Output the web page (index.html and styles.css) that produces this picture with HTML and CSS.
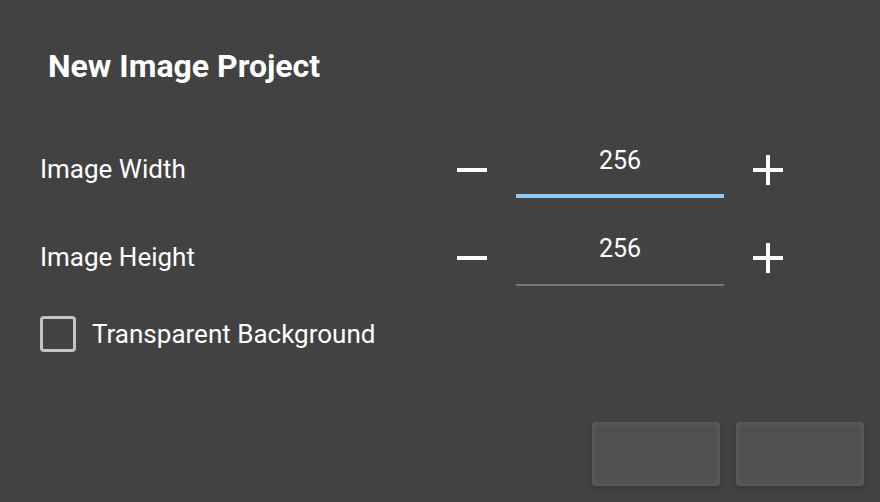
FILE: index.html
```html
<!DOCTYPE html>
<html>
<head>
<meta charset="utf-8">
<link rel="stylesheet" href="styles.css">
</head>
<body>
<div class="dialog">
  <h1 class="title">New Image Project</h1>
  <div class="row row-first">
    <span class="label">Image Width</span>
    <span class="btn-minus"></span>
    <div class="field field-focus"><span class="value">256</span></div>
    <span class="btn-plus"></span>
  </div>
  <div class="row">
    <span class="label">Image Height</span>
    <span class="btn-minus"></span>
    <div class="field"><span class="value">256</span></div>
    <span class="btn-plus"></span>
  </div>
  <label class="check-row">
    <span class="checkbox"></span>
    <span class="check-label">Transparent Background</span>
  </label>
  <div class="actions">
    <div class="action"></div>
    <div class="action"></div>
  </div>
</div>
</body>
</html>
```
FILE: styles.css
```css
html, body {
  margin: 0;
  padding: 0;
  background: #424242;
}
.dialog {
  width: 880px;
  height: 502px;
  box-sizing: border-box;
  background: #424242;
  font-family: Roboto, "Liberation Sans", sans-serif;
  color: #ffffff;
  display: flex;
  flex-direction: column;
}
.title {
  margin: 46px 0 0 48px;
  font-size: 32px;
  font-weight: 700;
  line-height: 40px;
  height: 40px;
}
.row {
  display: flex;
  align-items: flex-start;
  margin-left: 40px;
  height: 58px;
}
.row-first {
  margin-top: 54px;
}
.row + .row {
  margin-top: 30px;
}
.label {
  font-size: 26px;
  line-height: 30px;
  width: 417px;
  margin-top: 14px;
}
.btn-minus {
  width: 30px;
  height: 4px;
  margin-top: 28px;
  margin-right: 29px;
  background: #ffffff;
}
.btn-plus {
  width: 30px;
  height: 30px;
  margin-top: 15px;
  margin-left: 29px;
  background:
    linear-gradient(#ffffff, #ffffff) center / 30px 4px no-repeat,
    linear-gradient(#ffffff, #ffffff) center / 4px 30px no-repeat;
}
.field {
  width: 208px;
  height: 58px;
  box-sizing: border-box;
  border-bottom: 2px solid #777777;
  display: flex;
  justify-content: center;
  align-items: flex-start;
}
.field-focus {
  border-bottom: 4px solid #90caf9;
}
.value {
  font-size: 25px;
  line-height: 30px;
  margin-top: 6px;
}
.check-row {
  display: flex;
  align-items: center;
  margin: 30px 0 0 40px;
}
.checkbox {
  width: 36px;
  height: 36px;
  box-sizing: border-box;
  border: 3px solid #c4c4c4;
  border-radius: 4px;
}
.check-label {
  margin-left: 16px;
  font-size: 26px;
  line-height: 30px;
}
.actions {
  margin-top: auto;
  display: flex;
  justify-content: flex-end;
  gap: 16px;
  padding: 0 16px 16px 0;
}
.action {
  width: 128px;
  height: 64px;
  border-radius: 4px;
  background: #505050;
  box-shadow: inset 0 0 6px rgba(255,255,255,0.12), 0 2px 4px rgba(0,0,0,0.15);
}
```
